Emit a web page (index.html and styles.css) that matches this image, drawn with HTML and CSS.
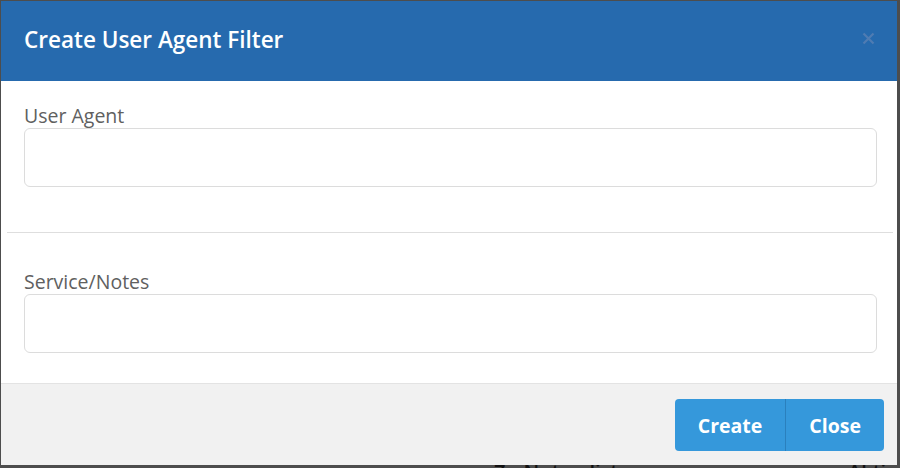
FILE: index.html
```html
<!DOCTYPE html>
<html lang="en">
<head>
<meta charset="utf-8">
<title>Create User Agent Filter</title>
<link rel="stylesheet" href="styles.css">
</head>
<body>
<div class="backdrop">
  <div class="behind">
    <span class="behind-a">Zu Nutzerliste</span>
    <span class="behind-b">Aktion</span>
  </div>
</div>
<div class="modal">
  <div class="modal-header">
    <h1 class="modal-title">Create User Agent Filter</h1>
    <button class="modal-x" type="button" aria-label="Close">
      <svg width="13" height="13" viewBox="0 0 13 13"><path d="M1.5 1.5 L11.5 11.5 M11.5 1.5 L1.5 11.5" stroke="currentColor" stroke-width="2.2" fill="none"/></svg>
    </button>
  </div>
  <div class="modal-body">
    <div class="field">
      <label class="field-label">User Agent</label>
      <input class="field-input" type="text">
    </div>
    <hr class="sep">
    <div class="field field-second">
      <label class="field-label">Service/Notes</label>
      <input class="field-input" type="text">
    </div>
  </div>
  <div class="modal-footer">
    <div class="btn-group">
      <button class="btn" type="button">Create</button>
      <button class="btn" type="button">Close</button>
    </div>
  </div>
</div>
</body>
</html>
```
FILE: styles.css
```css
html, body {
  margin: 0;
  padding: 0;
  width: 900px;
  height: 468px;
  overflow: hidden;
  font-family: "Open Sans", "Liberation Sans", sans-serif;
}
body {
  background: #4d4d4d;
  position: relative;
}
.backdrop {
  height: 468px;
  position: relative;
}
.behind {
  position: absolute;
  top: 458px;
  left: 0;
  right: 0;
  color: #111;
  font-size: 20px;
  font-weight: 600;
}
.behind-a { position: absolute; left: 494px; }
.behind-b { position: absolute; left: 848px; }

.modal {
  position: absolute;
  left: 1px;
  top: 1px;
  width: 896px;
  height: 464px;
  background: #fff;
  display: flex;
  flex-direction: column;
}
.modal-header {
  height: 80px;
  background: #266aae;
  display: flex;
  align-items: center;
  justify-content: space-between;
  padding: 0 22px 0 23px;
  box-sizing: border-box;
}
.modal-title {
  margin: 0;
  color: #fff;
  font-size: 22.5px;
  font-weight: 600;
  line-height: 1;
  padding-bottom: 1px;
}
.modal-x {
  border: 0;
  background: none;
  padding: 0;
  color: #4f7cb2;
  display: flex;
  margin-bottom: 6px;
}
.modal-body {
  flex: 1;
  padding: 22px 0 0;
}
.field {
  padding: 0 20px 0 23px;
  display: flex;
  flex-direction: column;
}
.field-label {
  color: #606060;
  font-size: 19.5px;
  line-height: 25px;
}
.field-input {
  height: 59px;
  box-sizing: border-box;
  border: 1px solid #dcdcdc;
  border-radius: 6px;
  margin: 0;
}
.sep {
  border: 0;
  border-top: 1px solid #dedede;
  margin: 45px 4px 0 6px;
}
.field-second {
  margin-top: 36px;
}
.modal-footer {
  height: 82px;
  background: #f1f1f1;
  border-top: 1px solid #e3e3e3;
  box-sizing: border-box;
  display: flex;
  justify-content: flex-end;
  align-items: flex-start;
  padding: 15px 13px 0 0;
}
.btn-group {
  display: flex;
  border-radius: 4px;
  overflow: hidden;
}
.btn {
  background: #3598db;
  color: #fff;
  border: 0;
  font-family: "Open Sans", "Liberation Sans", sans-serif;
  font-weight: 700;
  font-size: 19.5px;
  height: 52px;
  padding: 0 23px;
}
.btn + .btn {
  border-left: 1px solid #2a80bd;
  padding: 0 23px 0 23px;
}
```
